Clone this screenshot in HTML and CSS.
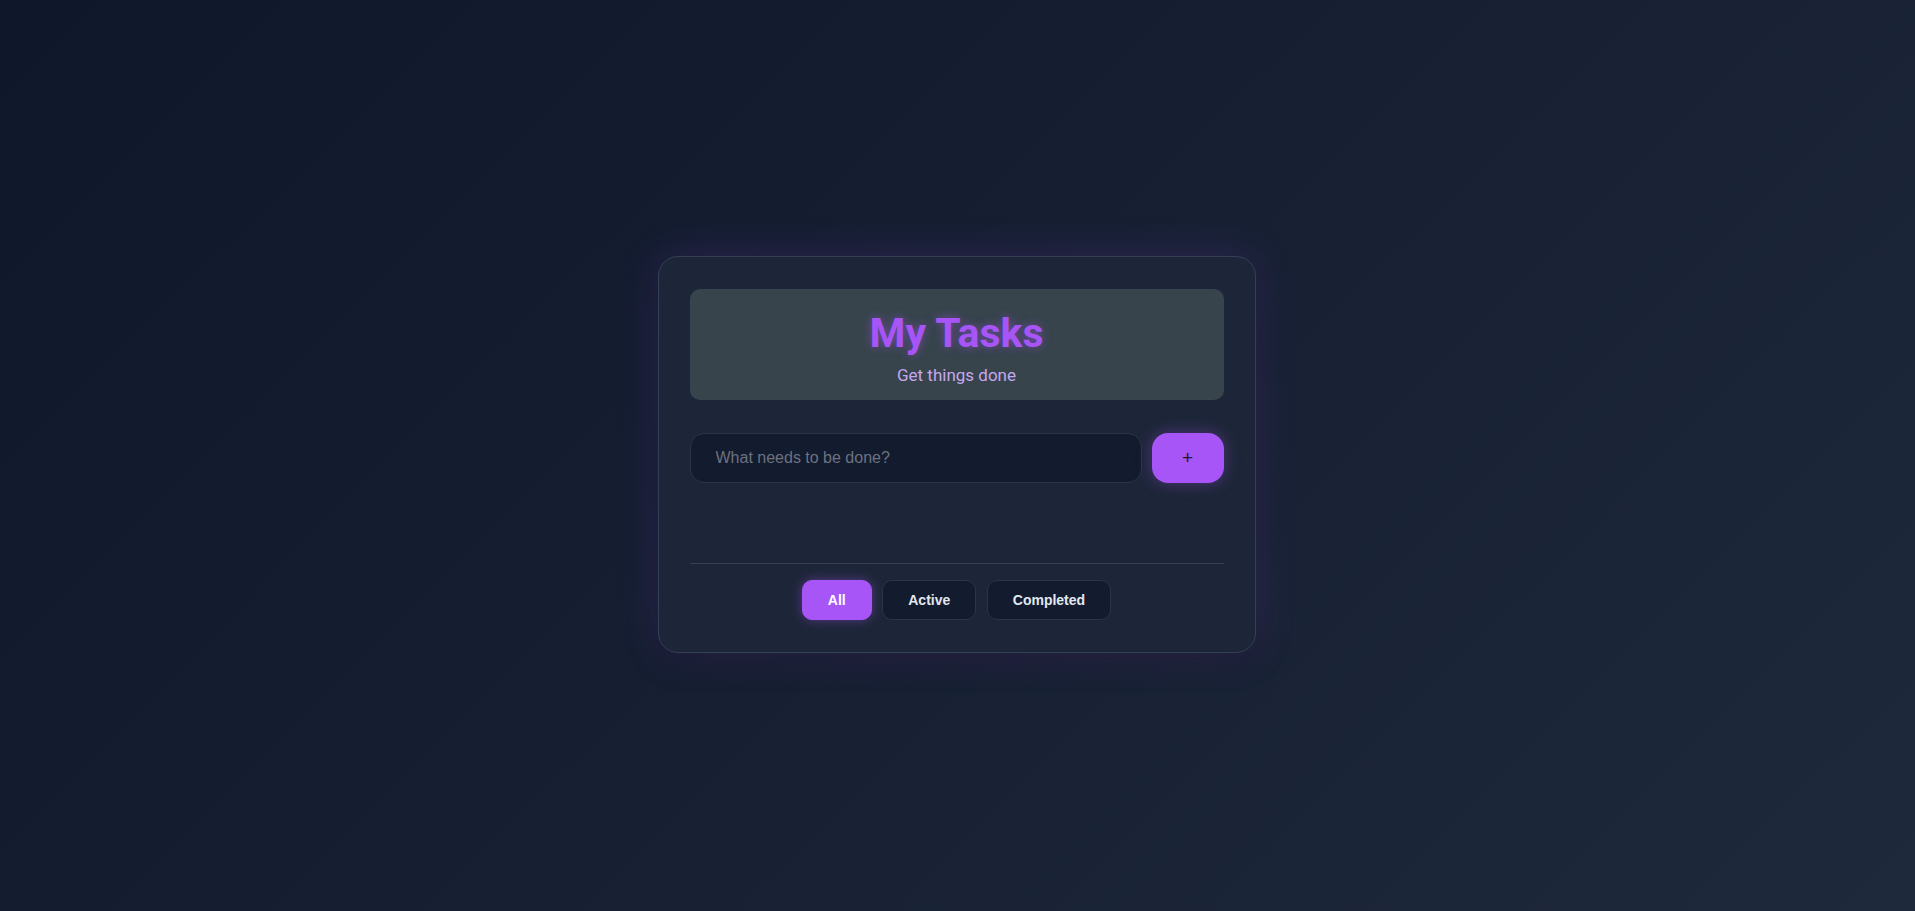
FILE: index.html
```html
<!DOCTYPE html>
<html lang="en">
<head>
<meta charset="utf-8">
<title>My Tasks</title>
<link rel="stylesheet" href="styles.css">
</head>
<body>
<main class="page">
  <section class="card">
    <header class="card-header">
      <h1 class="title">My Tasks</h1>
      <p class="subtitle">Get things done</p>
    </header>
    <form class="add-form">
      <input class="task-input" type="text" placeholder="What needs to be done?">
      <button class="add-btn" type="button">+</button>
    </form>
    <ul class="task-list"></ul>
    <nav class="filters">
      <button class="filter-btn active" type="button">All</button>
      <button class="filter-btn" type="button">Active</button>
      <button class="filter-btn" type="button">Completed</button>
    </nav>
  </section>
</main>
</body>
</html>
```

FILE: styles.css
```css
* { box-sizing: border-box; }
html, body { height: 100%; }
body {
  margin: 0;
  background: linear-gradient(135deg, #0f172a 0%, #1e293b 100%);
  font-family: "Liberation Sans", Arial, sans-serif;
  color: #e2e8f0;
}
.page {
  min-height: 100vh;
  display: flex;
  align-items: center;
  justify-content: center;
  padding-right: 2px;
}
.card {
  width: 598px;
  padding: 32px 31px;
  background: #1d2638;
  border: 1px solid #334155;
  border-radius: 20px;
  box-shadow: 0 0 40px rgba(168, 85, 247, 0.18), 0 10px 30px rgba(0, 0, 0, 0.25);
  margin-top: -2px;
}
.card-header {
  background: #37444c;
  border-radius: 10px;
  padding: 20px 20px 13px;
  text-align: center;
}
.title {
  margin: 0 0 6px;
  font-family: "Segoe UI", Roboto, sans-serif;
  font-size: 41px;
  line-height: 48px;
  font-weight: 700;
  color: #a855f7;
  text-shadow: 0 0 10px rgba(168, 85, 247, 0.5);
}
.subtitle {
  margin: 0;
  font-family: "Segoe UI", Roboto, sans-serif;
  font-size: 17px;
  line-height: 24px;
  color: #c4a8f0;
}
.add-form {
  display: flex;
  gap: 10px;
  margin-top: 33px;
}
.task-input {
  flex: 1;
  height: 50px;
  padding: 0 25px;
  background: #131b2e;
  border: 1px solid #2b3548;
  border-radius: 14px;
  font-family: "Liberation Sans", Arial, sans-serif;
  font-size: 16px;
  color: #e2e8f0;
  outline: none;
}
.task-input::placeholder { color: #6b7280; }
.add-btn {
  width: 72px;
  height: 50px;
  border: none;
  border-radius: 16px;
  background: #a855f7;
  color: #1e1b2e;
  font-family: "Liberation Sans", Arial, sans-serif;
  font-size: 19px;
  box-shadow: 0 0 16px rgba(168, 85, 247, 0.35);
}
.task-list {
  list-style: none;
  margin: 0;
  padding: 0;
  min-height: 80px;
}
.filters {
  display: flex;
  justify-content: center;
  gap: 10.5px;
  padding-top: 16px;
  border-top: 1px solid #334155;
}
.filter-btn {
  padding: 11px 25px;
  line-height: 16px;
  background: #131b2e;
  border: 1px solid #2b3548;
  border-radius: 10px;
  font-family: "Liberation Sans", Arial, sans-serif;
  font-size: 14px;
  font-weight: 700;
  color: #e2e8f0;
}
.filter-btn.active {
  background: #a855f7;
  border-color: #a855f7;
  color: #ffffff;
  box-shadow: 0 0 12px rgba(168, 85, 247, 0.4);
}
```
